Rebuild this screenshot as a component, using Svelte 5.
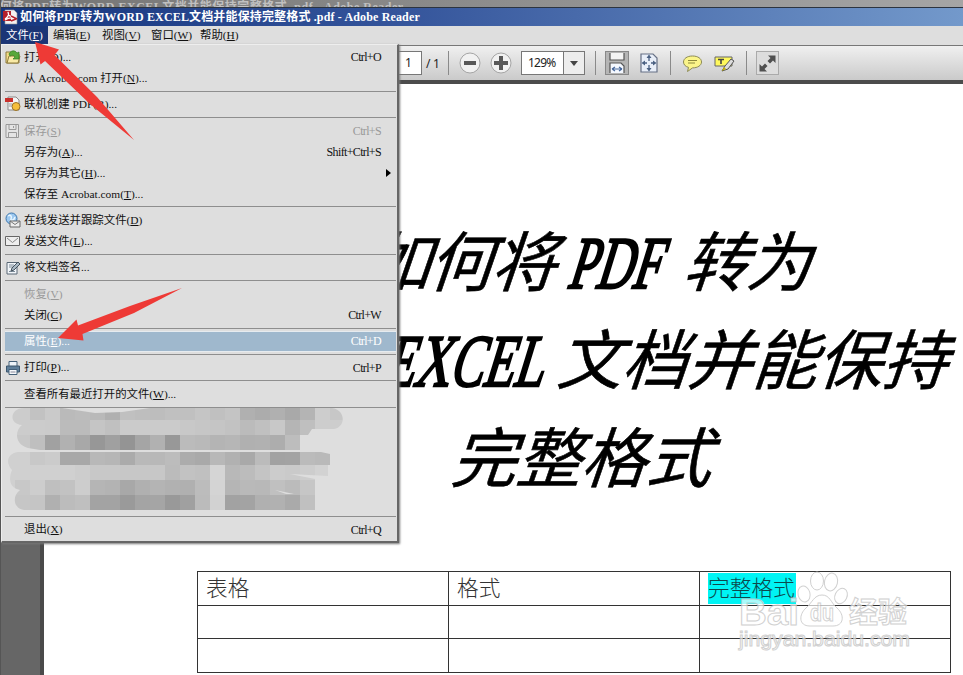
<script>
	const title = '如何将PDF转为WORD EXCEL文档并能保持完整格式 .pdf - Adobe Reader';

	const menus = [
		{ label: '文件', key: 'F', open: true },
		{ label: '编辑', key: 'E' },
		{ label: '视图', key: 'V' },
		{ label: '窗口', key: 'W' },
		{ label: '帮助', key: 'H' }
	];

	// null is a separator
	const items = [
		{ label: '打开', key: 'O', tail: '...', shortcut: 'Ctrl+O', icon: 'open' },
		{ label: '从 Acrobat.com 打开', key: 'N', tail: '...' },
		null,
		{ label: '联机创建 PDF', key: 'R', tail: '...', icon: 'create' },
		null,
		{ label: '保存', key: 'S', shortcut: 'Ctrl+S', icon: 'save', disabled: true },
		{ label: '另存为', key: 'A', tail: '...', shortcut: 'Shift+Ctrl+S' },
		{ label: '另存为其它', key: 'H', tail: '...', sub: true },
		{ label: '保存至 Acrobat.com', key: 'T', tail: '...' },
		null,
		{ label: '在线发送并跟踪文件', key: 'D', icon: 'online' },
		{ label: '发送文件', key: 'L', tail: '...', icon: 'mail' },
		null,
		{ label: '将文档签名...', icon: 'sign' },
		null,
		{ label: '恢复', key: 'V', disabled: true },
		{ label: '关闭', key: 'C', shortcut: 'Ctrl+W' },
		null,
		{ label: '属性', key: 'E', tail: '...', shortcut: 'Ctrl+D', active: true },
		null,
		{ label: '打印', key: 'P', tail: '...', shortcut: 'Ctrl+P', icon: 'print' },
		null,
		{ label: '查看所有最近打开的文件', key: 'W', tail: '...' },
		null,
		{ recent: true },
		null,
		{ label: '退出', key: 'X', shortcut: 'Ctrl+Q' }
	];

	// blurred recent files: grey levels of the 15px blocks
	const mosaic = [
		{ y: 0, h: 12, c: 'cc cc c2 ca ba bc b9 b0 c0 be bd c0 c0 c5 c0 c4 b0 ac b0 a9 b4 cd c7' },
		{ y: 12, h: 15, c: 'cc cc cc cb bb bb c5 c0 cb cb cb cb c8 c6 c5 c2 bb c0 c8 b5 bf cd cd' },
		{ y: 27, h: 15, c: 'c8 c8 bf a1 b1 a8 97 a0 94 a5 b1 98 bb b9 b4 b6 b0 b1 ad bd bf de de' },
		{ y: 44, h: 13, c: 'd0 d0 c8 cb a8 a8 b8 b6 ab b9 b8 bc ac a9 b8 b1 a9 bb a2 a3 bb b9 b9' },
		{ y: 57, h: 15, c: 'd0 d0 d0 d0 d0 cd c8 c8 c7 c7 c7 bb c2 c0 d5 b8 bc c4 cc ca cd d2 d8' },
		{ y: 72, h: 15, c: 'd0 c8 cd bf c2 cd b5 b3 a8 b0 b4 b1 b0 bc d4 b5 b9 b8 c0 bb c6 de de' },
		{ y: 87, h: 15, c: 'c8 c6 c5 b0 bc bf a3 a3 9a a4 a5 99 a0 bb d2 a2 a3 b0 b1 aa c0 de de' }
	];
	const blocks = mosaic.flatMap((r) =>
		r.c.split(' ').map((g, i) => ({ x: i * 15, y: r.y, h: r.h, fill: `#${g}${g}${g}` }))
	);

	const head = ['表格', '格式', '完整格式'];
</script>

<main>
	<div class="ghost">{title}</div>

	<div class="title">
		<svg width="16" height="16" viewBox="0 0 16 16">
			<path d="M2 1h9l3 3v11H2z" fill="#f4f0f0" stroke="#999" stroke-width=".6" />
			<path d="M0 2h8v10H0z" fill="#b5202a" />
			<path d="M2 10c3-2 4-5 3-7c0 4 3 5 8 7c-4-2-8-1-11 1" fill="none" stroke="#fff" stroke-width="1.3" />
			<path d="M8 7l6 3M8 12l5-2" stroke="#b5202a" stroke-width="1.4" />
		</svg>
		<span>{title}</span>
	</div>

	<nav>
		{#each menus as m}
			<span class:open={m.open}>{m.label}(<u>{m.key}</u>)</span>
		{/each}
	</nav>

	<div class="toolbar">
		<div class="pageno">1</div>
		<div class="total">/ 1</div>
		<i class="bar" style="margin-left: 0"></i>
		<svg class="round" width="22" height="22" viewBox="0 0 22 22">
			<circle cx="11" cy="11" r="10" fill="#f1f1f1" stroke="#a5a5a5" />
			<path d="M5 9h12v4H5z" fill="#585858" />
		</svg>
		<svg class="round2" width="22" height="22" viewBox="0 0 22 22">
			<circle cx="11" cy="11" r="10" fill="#f1f1f1" stroke="#a5a5a5" />
			<path d="M4 9h5V4h4v5h5v4h-5v5H9v-5H4z" fill="#585858" />
		</svg>
		<div class="zoom">
			<span>129%</span>
			<b><svg width="8" height="5" viewBox="0 0 8 5"><path d="M0 0h8L4 5z" fill="#444" /></svg></b>
		</div>
		<i class="bar"></i>
		<div class="btn pressed">
			<svg width="18" height="22" viewBox="0 0 18 22">
				<path d="M2 1v7h14V1" fill="#f4f4f4" stroke="#555" stroke-width="1.200" />
				<path d="M2 21V11h11l3 3v7" fill="#f4f8ff" stroke="#555" stroke-width="1.200" />
				<path d="M4 17h10M4 17l3-2M4 17l3 2M14 17l-3-2M14 17l-3 2" stroke="#47689c" stroke-width="1.200" />
			</svg>
		</div>
		<svg class="fit" width="18" height="20" viewBox="0 0 18 20">
			<path d="M1 1h12l4 4v14H1z" fill="#e8eef8" stroke="#667085" stroke-width="1.200" />
			<path d="M9 3v5M9 12v5M3 10h4M11 10h4" stroke="#4a6082" stroke-width="1.300" />
			<path d="M9 1.500L6.500 5h5zM9 18.500L6.500 15h5zM1.500 10L5 7.500v5zM16.500 10L13 7.500v5z" fill="#4a6082" />
		</svg>
		<i class="bar" style="margin-left: 12px"></i>
		<svg class="note" width="21" height="19" viewBox="0 0 21 19">
			<path d="M10.500 2C5 2 1.500 4.700 1.500 8c0 2.500 1.800 4.500 5 5.400L5.500 17.500l5-3.600c5.200 0 9-2.500 9-5.900S16 2 10.500 2z" fill="#fbf58a" stroke="#8c8a55" />
			<path d="M6 6.500h9M6 9h7" stroke="#8e8a3c" />
		</svg>
		<svg class="mark" width="22" height="19" viewBox="0 0 22 19">
			<path d="M1 3h17v9H1z" fill="#fff95c" stroke="#666" />
			<path d="M4 5.500h6M7 5.500V10" stroke="#444" stroke-width="1.600" />
			<path d="M8 17l3-5 6-7 3 2-6 8z" fill="#ddd" stroke="#555" />
			<path d="M8 17l2-4 2 2z" fill="#c8b400" />
		</svg>
		<i class="bar"></i>
		<div class="btn full">
			<svg width="19" height="19" viewBox="0 0 19 19">
				<path d="M10 1.500h7.500V9L15 6.500l-3 3L9.500 7l3-3zM9 17.500H1.500V10L4 12.500l3-3L9.500 12l-3 3z" fill="#505050" />
			</svg>
		</div>
	</div>

	<div class="doc">
		<div class="side"></div>
		<div class="page">
			<svg class="headline" width="919" height="440" viewBox="44 84 919 440">
				<g class="han">
					<text class="tight" transform="translate(364 286) skewX(-19)">如何将</text>
					<text class="tight" transform="translate(682 286) skewX(-19)">转为</text>
					<text transform="translate(556 384) skewX(-19)">文档并能保持</text>
					<text transform="translate(450 482) skewX(-19)">完整格式</text>
				</g>
				<g class="latin">
					<text transform="translate(566 288) skewX(-17)" textLength="92" lengthAdjust="spacingAndGlyphs">PDF</text>
					<text transform="translate(382 386) skewX(-17)" textLength="160" lengthAdjust="spacingAndGlyphs">EXCEL</text>
				</g>
			</svg>
			<table>
				<tbody>
					<tr>
						{#each head as h, i}
							<td><span class:hl={i == 2}>{h}</span></td>
						{/each}
					</tr>
					<tr><td></td><td></td><td></td></tr>
					<tr><td></td><td></td><td></td></tr>
				</tbody>
			</table>
		</div>
	</div>

	<svg class="watermark" width="190" height="90" viewBox="735 568 190 90">
		<g fill="#fff" fill-opacity=".8" stroke="#c9c9c9" stroke-width="1">
			<ellipse cx="804" cy="594" rx="6" ry="8" transform="rotate(-15 804 594)" />
			<ellipse cx="817" cy="581" rx="6.500" ry="9" />
			<ellipse cx="831" cy="582" rx="6.500" ry="9" transform="rotate(12 831 582)" />
			<ellipse cx="841" cy="596" rx="6" ry="8" transform="rotate(25 841 596)" />
			<path d="M822 595c8 0 9 8 15 13c8 7 7 18-4 18h-23c-12 0-11-12-4-18c6-5 8-13 16-13z" />
			<text x="739" y="625" font-size="37" font-weight="bold" textLength="60" lengthAdjust="spacingAndGlyphs">Bai</text>
			<text x="810" y="621" font-size="23" font-weight="bold" textLength="24" lengthAdjust="spacingAndGlyphs">du</text>
			<text x="849" y="623" font-size="29" font-weight="bold" textLength="58">经验</text>
			<text x="739" y="646" font-size="20" textLength="171" lengthAdjust="spacingAndGlyphs">jingyan.baidu.com</text>
		</g>
	</svg>

	<div class="menu">
		{#each items as it}
			{#if !it}
				<hr />
			{:else if it.recent}
				<svg class="recent" width="345" height="104" viewBox="0 0 345 104">
					<clipPath id="smear">
						<path d="M24 0C10 0 8 16 22 17C15 22 14 36 28 40L40 42H250V44H18C6 46 6 56 12 62C8 72 10 80 20 82C12 88 13 100 24 102H315V71L290 66L328 68V57H330V46L312 42H300V27H308L312 21H334C346 19 346 2 332 0Z" />
					</clipPath>
					<g clip-path="url(#smear)">
						{#each blocks as b}
							<rect x={b.x} y={b.y} width="15" height={b.h} fill={b.fill} />
						{/each}
					</g>
					<path d="M62 0L95 5L122 4L150 0ZM275 82L294 86L286 86Z" fill="#dedede" />
				</svg>
			{:else}
				<div class="item" class:disabled={it.disabled} class:active={it.active}>
					<span class="icon">
						{#if it.icon}
							<svg width="16" height="16" viewBox="0 0 16 16">
								{#if it.icon == 'open'}
									<path d="M1 3h5l1 2h7v9H1z" fill="#f3dc86" stroke="#8d7a3c" />
									<path d="M2 14l2-7h11l-2 7z" fill="#f9eaa6" stroke="#8d7a3c" />
									<path d="M4 5c2-4 6-4 8-1l2-1v7H8l2-2c-1-2-3-2-5-1z" fill="#58a83a" stroke="#2f7c22" stroke-width=".7" />
								{:else if it.icon == 'create'}
									<path d="M3 1h8l3 3v10H3z" fill="#f5f5f5" stroke="#888" />
									<path d="M0 2h8v4H0z" fill="#c9302c" />
									<circle cx="11" cy="10.500" r="4" fill="#f6bf3c" stroke="#9a7228" />
									<path d="M4 8h3M4 10h3" stroke="#999" />
								{:else if it.icon == 'save'}
									<path d="M1 1.500h12.500v13H1z" fill="#e4e4e4" stroke="#999" />
									<path d="M4 1.500v5h7v-5M3.500 14.500v-5h8v5M8.500 3v2" fill="none" stroke="#999" />
								{:else if it.icon == 'online'}
									<circle cx="6.500" cy="6.500" r="5.500" fill="#9cc8f0" stroke="#3c76ad" />
									<path d="M3 4c3-2 4 1 3 3s3 2 4-2" fill="none" stroke="#e8f6ff" stroke-width="1.500" />
									<path d="M5 9h10v6H5z" fill="#eee" stroke="#666" />
									<path d="M5 9l5 3.500L15 9" fill="none" stroke="#777" />
								{:else if it.icon == 'mail'}
									<path d="M.5 3.500h14v9H.5z" fill="#eee" stroke="#666" />
									<path d="M2 5l5.500 4.500L13 5" fill="none" stroke="#888" />
								{:else if it.icon == 'sign'}
									<path d="M2 2.500h10v11.500H2z" fill="#f2f6fa" stroke="#5a6876" />
									<path d="M4 5h5M4 7h4M4 11.500h6" stroke="#7a8a98" />
									<path d="M6 11l1-3 6-6 2 2-6 6z" fill="#a9b8c4" stroke="#44525e" />
								{:else}
									<path d="M4 6V1.500h8V6" fill="#eef4fa" stroke="#446079" />
									<path d="M1.500 6h13v6h-13z" fill="#5f7f9b" stroke="#3c566d" />
									<path d="M4 9.500h8v5H4z" fill="#f6f9fc" stroke="#446079" />
									<path d="M5.500 12h5" stroke="#889" />
								{/if}
							</svg>
						{/if}
					</span>
					<span class="label">{it.label}{#if it.key}(<u>{it.key}</u>){/if}{it.tail || ''}</span>
					{#if it.shortcut}<span class="shortcut">{it.shortcut}</span>{/if}
					{#if it.sub}<svg class="sub" width="5" height="8" viewBox="0 0 5 8"><path d="M0 0l5 4-5 4z" /></svg>{/if}
				</div>
			{/if}
		{/each}
	</div>

	<!-- red pointers -->
	<svg class="arrows" width="200" height="350" viewBox="0 0 200 350" fill="#ee3a36">
		<path d="M35 42L59 49.500L54.500 55L97 97L134 140L90 104L45 61L40.500 64.500Z" />
		<path d="M58 338L76.500 319.500L78 325.500L130 306L182 288L134 313L82.500 334L83.500 340.500Z" />
	</svg>
</main>

<style>
	:global(body) {
		margin: 0;
		overflow: hidden;
	}

	main {
		position: relative;
		display: flex;
		flex-direction: column;
		width: 963px;
		height: 675px;
		overflow: hidden;
		box-sizing: border-box;
		border-left: 1px solid #555;
		background: #fff;
		font: 11.4px/1 "Liberation Serif", "Noto Sans CJK SC", serif;
		color: #111;
	}

	.ghost {
		height: 7px;
		padding-left: 1px;
		overflow: hidden;
		text-indent: -15px;
		white-space: nowrap;
		font-size: 12px;
		font-weight: bold;
		letter-spacing: 0.5px;
		line-height: 14px;
		color: #c0c0c0;
		background: linear-gradient(90deg, #747474, #a5a5a5);
		border-bottom: 1px solid #2c3440;
	}

	.title {
		display: flex;
		align-items: center;
		height: 18px;
		padding-left: 2px;
		background: linear-gradient(90deg, #16367f, #33539a 40%, #7399cb);
		color: #fff;
		font-size: 12px;
		font-weight: bold;
		letter-spacing: 0.15px;
		white-space: pre;
	}

	.title span {
		margin-left: 1px;
	}

	nav {
		display: flex;
		height: 19px;
		background: #dedede;
		border-bottom: 1px solid #777;
		line-height: 18px;
	}

	nav span {
		width: 49px;
		box-sizing: border-box;
		padding-left: 5px;
		white-space: nowrap;
	}

	nav span.open {
		width: 47px;
		background: #1b3576;
		color: #fff;
	}

	.toolbar {
		display: flex;
		align-items: center;
		height: 34px;
		flex: none;
		padding-left: 397px;
		background: linear-gradient(#f0f0f0, #cacaca);
		border-bottom: 4px solid #4c4c4c;
		font: 12px "Noto Sans", sans-serif;
		color: #222;
	}

	.toolbar > * {
		flex: none;
	}

	.pageno {
		width: 24px;
		height: 24px;
		box-sizing: border-box;
		padding-left: 6px;
		line-height: 22px;
		background: #fff;
		border: 1px solid #777;
	}

	.total {
		width: 22px;
		margin-left: 4px;
		letter-spacing: -0.3px;
	}

	.bar {
		width: 1px;
		height: 24px;
		margin-left: 10px;
		background: #8a8a8a;
	}

	.round {
		margin-left: 10px;
	}

	.round2 {
		margin-left: 9px;
	}

	.zoom {
		display: flex;
		width: 64px;
		height: 24px;
		box-sizing: border-box;
		margin-left: 9px;
		border: 1px solid #777;
		background: #fff;
		line-height: 22px;
	}

	.zoom span {
		width: 41px;
		padding-left: 6px;
		box-sizing: border-box;
		letter-spacing: -0.8px;
	}

	.zoom b {
		display: flex;
		flex: 1;
		align-items: center;
		justify-content: center;
		border-left: 1px solid #777;
		background: #ededed;
	}

	.btn {
		display: flex;
		align-items: center;
		justify-content: center;
		width: 24px;
		height: 24px;
		margin-left: 9px;
		box-sizing: border-box;
		border: 1px solid #888;
	}

	.pressed {
		background: #b5b5b5;
	}

	.full {
		width: 23px;
		margin-left: 9px;
		background: #ddd;
		border-color: #aaa;
	}

	.fit {
		margin-left: 11px;
	}

	.note {
		margin-left: 11px;
	}

	.mark {
		margin-left: 11px;
	}

	.doc {
		display: flex;
		flex: 1;
		min-height: 0;
	}

	.side {
		width: 39px;
		flex: none;
		background: #666;
		border-right: 4px solid #4a4a4a;
	}

	.page {
		flex: 1;
		min-width: 0;
		background: #fff;
	}

	.headline {
		display: block;
	}

	.han {
		font: 65px "Noto Sans CJK SC", sans-serif;
		stroke: #000;
		stroke-width: 0.6px;
	}

	.tight {
		letter-spacing: -2px;
	}

	.latin {
		font: 74px "Liberation Serif", serif;
		stroke: #000;
		stroke-width: 2.6px;
	}

	table {
		width: 754px;
		margin: 47px 0 0 153px;
		table-layout: fixed;
		border-collapse: collapse;
	}

	td {
		height: 33.5px;
		box-sizing: border-box;
		padding: 0 0 0 8px;
		border: 1px solid #333;
		font: 300 21.700px/28px "Noto Sans CJK SC", sans-serif;
		color: #333;
	}

	td span {
		display: block;
		width: 88px;
		height: 31px;
		overflow: hidden;
		white-space: nowrap;
	}

	.hl {
		background: #00f4f4;
		color: #0c484c;
	}

	.watermark {
		position: absolute;
		left: 734px;
		top: 568px;
		font-family: "Liberation Sans", "Noto Sans CJK SC", sans-serif;
		opacity: 0.85;
	}

	.menu {
		position: absolute;
		left: 0;
		top: 44px;
		width: 398px;
		height: 499px;
		box-sizing: border-box;
		padding: 1.500px 1px 0 3px;
		background: #dedede;
		border: 1px solid #eee;
		border-right: 2px solid #666;
		border-bottom: 2px solid #666;
		box-shadow: 1px 1px 2px #777;
	}

	hr {
		height: 1px;
		margin: 2.200px 0;
		border: 0;
		background: #8e8e8e;
	}

	.item {
		display: flex;
		align-items: center;
		height: 21px;
		white-space: nowrap;
	}

	.icon {
		width: 19px;
		height: 16px;
	}

	.label {
		flex: 1;
		padding-top: 1px;
	}

	.shortcut {
		margin-right: 15px;
		font-size: 12px;
		letter-spacing: -0.65px;
	}

	.sub {
		margin-right: 5px;
	}

	.disabled {
		color: #999;
	}

	.active {
		box-sizing: border-box;
		border: solid #e6ebef;
		border-width: 1px 0;
		background: #9fb8cd;
		color: #fff;
	}

	.recent {
		display: block;
		margin: -2px 0 4px -5px;
	}

	.arrows {
		position: absolute;
		left: -1px;
		top: 0;
	}
</style>
